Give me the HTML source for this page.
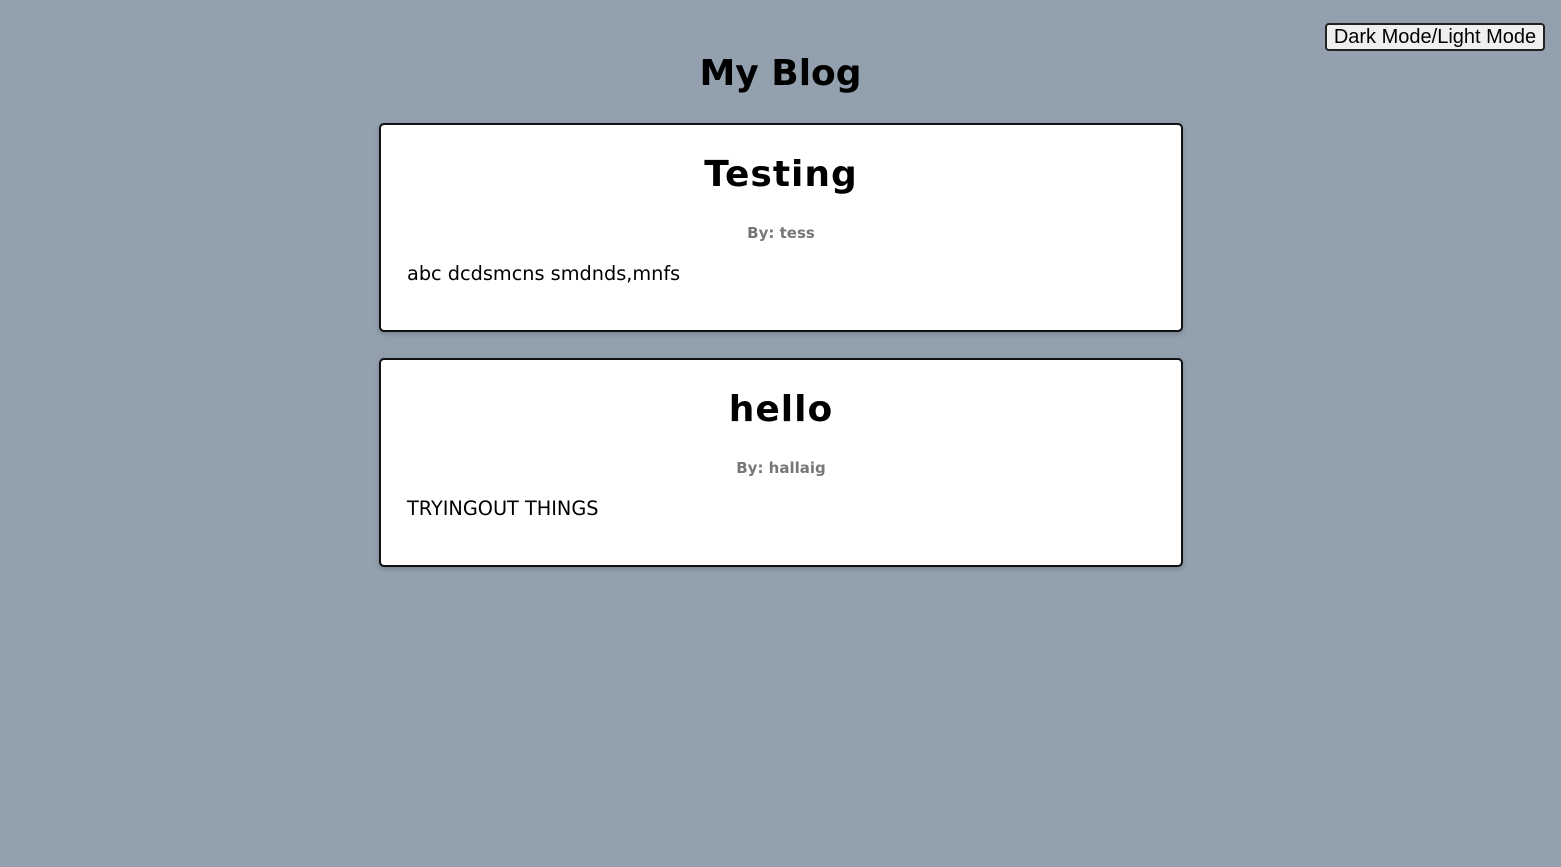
<!DOCTYPE html>
<html><head><style>
body{margin:0;background:#93a1ae;width:1561px;height:867px;font-family:"DejaVu Sans","Liberation Sans",sans-serif;position:relative;overflow:hidden}
button{position:absolute;left:1325px;top:23px;width:220px;height:28px;font-family:"Liberation Sans",sans-serif;font-size:20px;background:#efefef;border:2px solid #222;border-radius:4px;padding:0;color:#000}
h1{position:absolute;top:52px;left:0;width:1561px;text-align:center;margin:0;font-size:36px;line-height:44px}
.card{position:absolute;left:379px;width:800px;height:205px;background:#fff;border:2px solid #111;border-radius:5px;box-shadow:0 2px 6px rgba(0,0,0,.2)}
.card h2{margin:0;position:absolute;top:27px;width:100%;text-align:center;font-size:36px;line-height:46px;letter-spacing:1px}
.card .by{position:absolute;top:99px;width:100%;text-align:center;font-size:15px;font-weight:bold;color:#777}
.card p{position:absolute;top:137px;left:26px;margin:0;font-size:19.3px}
</style></head><body>
<button>Dark Mode/Light Mode</button>
<h1>My Blog</h1>
<div class="card" style="top:123px"><h2>Testing</h2><div class="by">By: tess</div><p>abc dcdsmcns smdnds,mnfs</p></div>
<div class="card" style="top:358px"><h2>hello</h2><div class="by">By: hallaig</div><p>TRYINGOUT THINGS</p></div>
</body></html>
